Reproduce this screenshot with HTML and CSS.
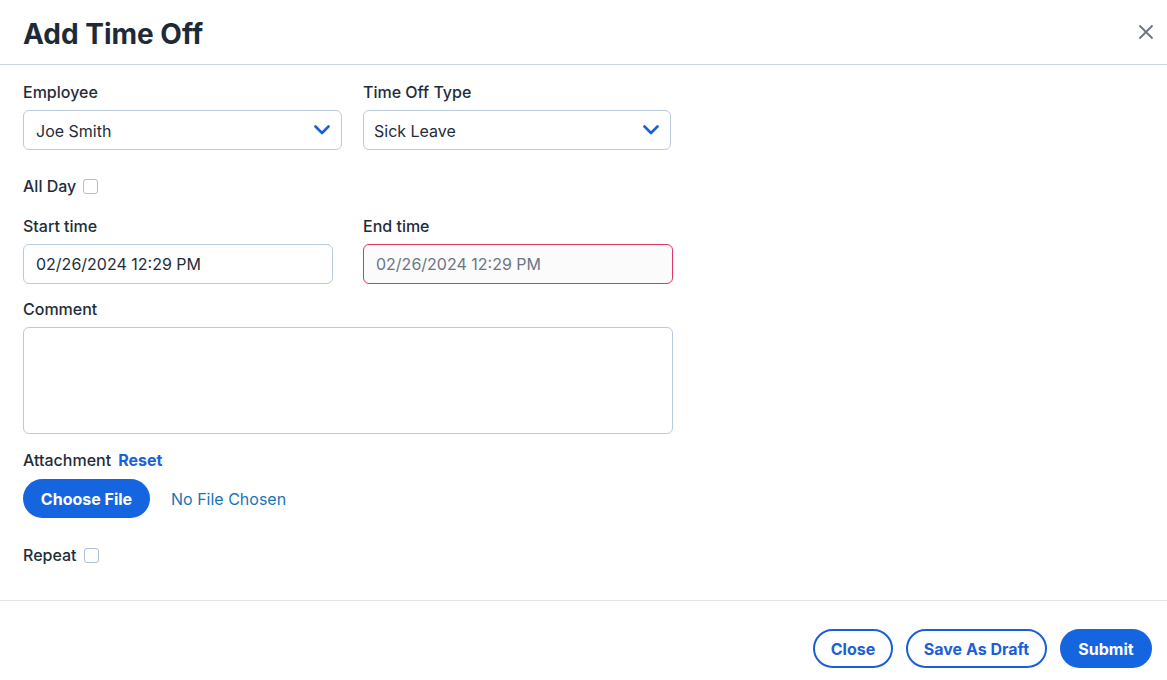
FILE: index.html
```html
<!DOCTYPE html>
<html lang="en">
<head>
    <meta charset="UTF-8">
    <meta name="viewport" content="width=device-width, initial-scale=1.0">
    <title>Add Time Off</title>
    <link rel="stylesheet" href="styles.css">
</head>
<body>

<div class="modal">
    <div class="modal-header">
        <h1>Add Time Off</h1>
        <button class="close-x" aria-label="Close">
            <svg width="16" height="16" viewBox="0 0 16 16"><path d="M1.5 1.5 L14.5 14.5 M14.5 1.5 L1.5 14.5" stroke="#6b7280" stroke-width="1.8" fill="none"/></svg>
        </button>
    </div>

    <div class="modal-body">
        <div class="row">
            <div class="field field-wide">
                <label>Employee</label>
                <div class="select">
                    <span>Joe Smith</span>
                    <svg class="chevron" width="16" height="10" viewBox="0 0 16 10"><path d="M1.5 1.5 L8 8 L14.5 1.5" stroke="#1a5fd8" stroke-width="2.6" fill="none" stroke-linecap="round" stroke-linejoin="round"/></svg>
                </div>
            </div>
            <div class="field field-narrow">
                <label>Time Off Type</label>
                <div class="select">
                    <span>Sick Leave</span>
                    <svg class="chevron" width="16" height="10" viewBox="0 0 16 10"><path d="M1.5 1.5 L8 8 L14.5 1.5" stroke="#1a5fd8" stroke-width="2.6" fill="none" stroke-linecap="round" stroke-linejoin="round"/></svg>
                </div>
            </div>
        </div>

        <div class="check-row all-day">
            <span>All Day</span>
            <span class="checkbox"></span>
        </div>

        <div class="row row-time">
            <div class="field field-time">
                <label>Start time</label>
                <div class="input">02/26/2024 12:29 PM</div>
            </div>
            <div class="field field-time">
                <label>End time</label>
                <div class="input input-error">02/26/2024 12:29 PM</div>
            </div>
        </div>

        <div class="field comment">
            <label>Comment</label>
            <div class="textarea"></div>
        </div>

        <div class="attach-label">
            <span>Attachment</span>
            <a class="reset">Reset</a>
        </div>
        <div class="file-row">
            <button class="btn btn-primary choose">Choose File</button>
            <span class="no-file">No File Chosen</span>
        </div>

        <div class="check-row repeat">
            <span>Repeat</span>
            <span class="checkbox"></span>
        </div>
    </div>

    <div class="modal-footer">
        <button class="btn btn-outline btn-close">Close</button>
        <button class="btn btn-outline btn-draft">Save As Draft</button>
        <button class="btn btn-primary btn-submit">Submit</button>
    </div>
</div>

</body>
</html>
```

FILE: styles.css
```css
body {
    margin: 0;
    font-family: Inter, "Noto Sans", sans-serif;
    color: #1f2d3a;
    background: #fff;
}
.modal {
    width: 1167px;
    height: 680px;
    display: flex;
    flex-direction: column;
}
.modal-header {
    height: 65px;
    box-sizing: border-box;
    border-bottom: 1px solid #c6d6e3;
    display: flex;
    align-items: center;
    justify-content: space-between;
    padding: 0 13px 0 23px;
}
.modal-header h1 {
    margin: 0;
    font-size: 28px;
    font-weight: 700;
    color: #1d2b38;
    position: relative;
    top: 2px;
}
.close-x {
    border: none;
    background: none;
    padding: 0;
    width: 16px;
    height: 16px;
    margin-bottom: 1px;
    cursor: pointer;
}
.modal-body {
    padding: 17px 23px 0 23px;
    height: 536px;
    box-sizing: border-box;
    border-bottom: 1px solid #e2e4e7;
}
label, .check-row span:first-child, .attach-label span {
    display: block;
    font-size: 16px;
    font-weight: 500;
    line-height: 20px;
    color: #1f2d3a;
}
.row {
    display: flex;
    gap: 21px;
}
.row-time {
    gap: 30px;
}
.field label {
    margin-bottom: 8px;
}
.field-wide { width: 319px; }
.field-narrow { width: 308px; }
.field-time { width: 310px; }
.select, .input {
    height: 40px;
    box-sizing: border-box;
    border: 1px solid #b8cbdd;
    border-radius: 6px;
    display: flex;
    align-items: center;
    justify-content: space-between;
    padding: 0 11px 0 12px;
    font-size: 16px;
    color: #1f2d3a;
}
.field-narrow .select {
    padding-left: 10px;
}
.select span {
    position: relative;
    top: 1px;
}
.input-error {
    border-color: #e0355e;
    background: #fbfbfb;
    color: #6b7684;
}
.check-row {
    display: flex;
    align-items: center;
    gap: 7px;
}
.checkbox {
    width: 13px;
    height: 13px;
    border: 1px solid #a9c0d6;
    border-radius: 3px;
    background: #fff;
}
.all-day {
    margin: 26px 0 20px 0;
}
.comment {
    margin-top: 15px;
    width: 650px;
}
.textarea {
    height: 107px;
    box-sizing: border-box;
    border: 1px solid #b8cbdd;
    border-radius: 6px;
}
.attach-label {
    display: flex;
    align-items: center;
    gap: 7px;
    margin-top: 16px;
}
.reset {
    font-size: 16px;
    font-weight: 700;
    color: #1a62d9;
    cursor: pointer;
}
.file-row {
    display: flex;
    align-items: center;
    gap: 21px;
    margin-top: 9px;
}
.no-file {
    font-size: 16px;
    color: #1974b8;
}
.btn {
    font-family: Inter, "Noto Sans", sans-serif;
    font-size: 16px;
    font-weight: 700;
    height: 39px;
    border-radius: 20px;
    padding: 0;
    cursor: pointer;
    box-sizing: border-box;
}
.btn-primary {
    background: #1565e0;
    color: #fff;
    border: none;
}
.btn-outline {
    background: #fff;
    color: #1a5fd8;
    border: 2px solid #1a5fd8;
}
.choose { width: 127px; }
.repeat {
    margin-top: 27px;
}
.modal-footer {
    display: flex;
    justify-content: flex-end;
    gap: 13px;
    padding: 28px 15px 0 0;
}
.btn-close { width: 80px; }
.btn-draft { width: 141px; }
.btn-submit { width: 92px; }
```
